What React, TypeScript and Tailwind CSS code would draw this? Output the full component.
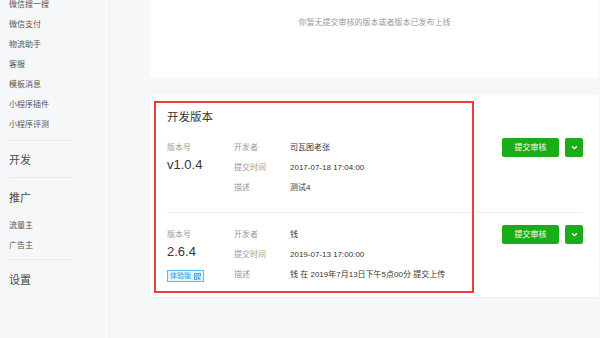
import React from "react";

const font = { fontFamily: '"Liberation Sans", "Noto Sans CJK SC", sans-serif' };

type Version = {
  number: string;
  dev: string;
  time: string;
  desc: string;
  trial?: boolean;
};

const versions: Version[] = [
  { number: "v1.0.4", dev: "司瓦图老张", time: "2017-07-18 17:04:00", desc: "测试4" },
  {
    number: "2.6.4",
    dev: "钱",
    time: "2019-07-13 17:00:00",
    desc: "钱 在 2019年7月13日下午5点00分 提交上传",
    trial: true,
  },
];

function SideItem({ label }: { label: string }) {
  return <div className="h-[20px] text-[8px] leading-[20px] text-[#555]">{label}</div>;
}

function SideHead({ label, className }: { label: string; className?: string }) {
  return (
    <div className={`h-[20px] text-[11px] leading-[20px] text-[#4a4a4a] ${className ?? ""}`}>{label}</div>
  );
}

function Divider({ className }: { className?: string }) {
  return <div className={`h-px w-[64px] bg-[#e9ebee] ${className ?? ""}`} />;
}

function QrIcon() {
  return (
    <svg width="7" height="7" viewBox="0 0 7 7" fill="none" stroke="#1d9ae0" strokeWidth="0.8">
      <rect x="0.5" y="0.5" width="2.4" height="2.4" />
      <rect x="4.1" y="0.5" width="2.4" height="2.4" />
      <rect x="0.5" y="4.1" width="2.4" height="2.4" />
      <path d="M4.1 4.1h1.2v1.2h1.2v1.2H4.1z" fill="#1d9ae0" stroke="none" />
    </svg>
  );
}

function VersionBlock({ v }: { v: Version }) {
  return (
    <div className="flex items-start">
      <div className="w-[67px] pt-[4px]">
        <div className="text-[8px] leading-[12px] text-[#9a9a9a]">版本号</div>
        <div className="mt-[2px] text-[13px] leading-[18px] text-[#353535]">{v.number}</div>
        {v.trial && (
          <div className="mt-px inline-flex h-[12px] items-center gap-[3px] border border-[#58bdee] bg-[#e6f6fe] px-[2px] text-[7px] leading-[10px] text-[#1d9ae0]">
            体验版
            <QrIcon />
          </div>
        )}
      </div>
      <div className="w-[56px] text-[8px] leading-[20px] text-[#9a9a9a]">
        <div>开发者</div>
        <div>提交时间</div>
        <div>描述</div>
      </div>
      <div className="text-[8px] leading-[20px] text-[#353535]">
        <div>{v.dev}</div>
        <div>{v.time}</div>
        <div>{v.desc}</div>
      </div>
      <div className="ml-auto flex gap-[6px]">
        <button
          type="button"
          className="flex h-[19px] w-[57px] items-center justify-center rounded-[2px] bg-[#1aad19] text-[8px] text-white"
        >
          提交审核
        </button>
        <button
          type="button"
          className="flex h-[19px] w-[18px] items-center justify-center rounded-[2px] bg-[#1aad19]"
        >
          <svg width="7" height="5" viewBox="0 0 7 5" fill="none" stroke="#fff" strokeWidth="1.3">
            <path d="M1 1.2l2.5 2.4L6 1.2" />
          </svg>
        </button>
      </div>
    </div>
  );
}

export default function App() {
  return (
    <div className="flex h-[338px] w-[600px] overflow-hidden bg-[#f6f7f9]" style={font}>
      <aside className="h-full w-[110px] shrink-0 border-r border-[#eceef0] pl-[9px]">
        <div className="mt-[-5px] flex flex-col">
          <SideItem label="微信搜一搜" />
          <SideItem label="微信支付" />
          <SideItem label="物流助手" />
          <SideItem label="客服" />
          <SideItem label="模板消息" />
          <SideItem label="小程序插件" />
          <SideItem label="小程序评测" />
          <Divider className="mt-[5px]" />
          <SideHead label="开发" className="mt-[9px]" />
          <Divider className="mt-[7px]" />
          <SideHead label="推广" className="mt-[10px]" />
          <div className="mt-[8px]">
            <SideItem label="流量主" />
            <SideItem label="广告主" />
          </div>
          <Divider className="mt-[3px]" />
          <SideHead label="设置" className="mt-[10px]" />
        </div>
      </aside>

      <main className="ml-[40px] flex w-[449px] flex-col">
        <section className="h-[78px] bg-white pt-[17px] text-center text-[8px] leading-[12px] text-[#9a9a9a]">
          你暂无提交审核的版本或者版本已发布上线
        </section>

        <section className="relative mt-[17px] h-[202px] bg-white pl-[17px] pr-[16px] pt-[14px] shadow-[0_1px_2px_rgba(0,0,0,0.04)]">
          <div className="text-[11.5px] leading-[16px] text-[#353535]">开发版本</div>
          <div className="mt-[13px]">
            <VersionBlock v={versions[0]} />
          </div>
          <div className="mt-[14px] h-px bg-[#eeeff1]" />
          <div className="mt-[12px]">
            <VersionBlock v={versions[1]} />
          </div>
          <div className="pointer-events-none absolute left-[4px] top-[6px] h-[192px] w-[320px] border-2 border-[#f03c3c]" />
        </section>
      </main>
    </div>
  );
}
